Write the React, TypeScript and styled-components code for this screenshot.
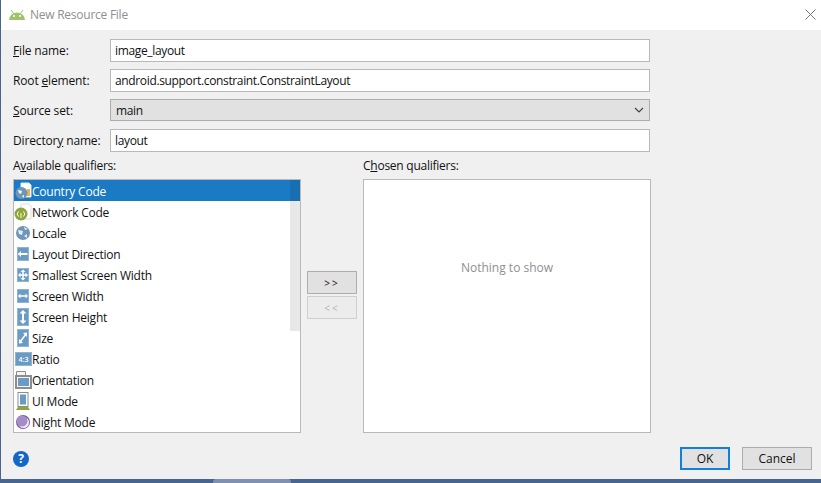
import React from 'react';
import styled, { createGlobalStyle } from 'styled-components';

const Global = createGlobalStyle`
  html, body { margin: 0; padding: 0; background: #4a6491; }
  body { font-family: "Open Sans", "Noto Sans CJK KR", sans-serif; font-size: 12px; color: #111; }
`;

const RatioText = styled.text`
  font-size: 7px;
  font-weight: 600;
  fill: #fff;
  text-anchor: middle;
`;

const Blue = '#6b9ac4';

function Sq({ children, tall }: { children: React.ReactNode; tall?: boolean }) {
  return (
    <svg width="16" height="18" viewBox="0 0 16 18">
      <rect x="2.500" y={tall ? 0.5 : 2.5} width="11" height={tall ? 17 : 13} fill={Blue} stroke="#8fb5d5" />
      {children}
    </svg>
  );
}

const icons: Record<string, React.ReactNode> = {
  country: (
    <svg width="17" height="18" viewBox="0 0 17 18">
      <path d="M6 1h8l2 2v12H6z" fill="#fff" stroke="#e8e8e8" />
      <rect x="12" y="7" width="3" height="7" fill="#e8b64a" />
      <circle cx="6.500" cy="11" r="6" fill="#6f96b8" />
      <path d="M3 8l4 1-1 3-2-1zM7 14l2-1v3z" fill="#fff" />
    </svg>
  ),
  network: (
    <svg width="18" height="18" viewBox="0 0 18 18">
      <path d="M7 1h8l2 2v13H7z" fill="#fff" stroke="#ddd" />
      <circle cx="7" cy="11" r="6.500" fill="#8fa63a" />
      <path d="M7 10v5M4.500 8.500a3.500 3.500 0 0 0 0 5M9.500 8.500a3.500 3.500 0 0 1 0 5" stroke="#fff" fill="none" />
    </svg>
  ),
  locale: (
    <svg width="16" height="18" viewBox="0 0 16 18">
      <circle cx="8" cy="9" r="7" fill="#6f96b8" />
      <path d="M3 6l5 1-1 4-3-1zM9 12l3-2v4zM9 3l4 2-3 1z" fill="#e4edf4" />
    </svg>
  ),
  direction: (
    <Sq>
      <path d="M3.500 9h9" stroke="#fff" strokeWidth="2" />
      <path d="M3 9l3-3v6z" fill="#fff" />
    </Sq>
  ),
  smallest: (
    <Sq>
      <path d="M4 9h8M8 5v8" stroke="#fff" strokeWidth="1.500" />
      <path d="M3 9l2.500-2.500v5zM13 9l-2.500-2.500v5zM8 3.500L5.500 6h5zM8 14.500L5.500 12h5z" fill="#fff" />
    </Sq>
  ),
  width: (
    <Sq>
      <path d="M4 9h8" stroke="#fff" strokeWidth="1.500" />
      <path d="M3 9l2.500-2.500v5zM13 9l-2.500-2.500v5z" fill="#fff" />
    </Sq>
  ),
  height: (
    <Sq tall>
      <path d="M8 3v12" stroke="#fff" strokeWidth="2" />
      <path d="M8 2L4.500 5.500h7zM8 16l-3.500-3.500h7z" fill="#fff" />
    </Sq>
  ),
  size: (
    <Sq tall>
      <path d="M5 13l6-8" stroke="#fff" strokeWidth="1.500" />
      <path d="M12 3.500V8L8 4zM4 14.500V10l4 4z" fill="#fff" />
    </Sq>
  ),
  ratio: (
    <svg width="17" height="18" viewBox="0 0 17 18">
      <rect x="0.500" y="2.500" width="16" height="13" fill={Blue} stroke="#8fb5d5" />
      <RatioText x="8.500" y="11.500">4:3</RatioText>
    </svg>
  ),
  orientation: (
    <svg width="17" height="18" viewBox="0 0 17 18">
      <path d="M1.500 5V.5h9V5" fill="#f4f4f4" stroke="#8d8d8d" />
      <rect x="1" y="5" width="15" height="12" fill="#f4f4f4" stroke="#8d8d8d" strokeWidth="2" />
      <rect x="3" y="7" width="11" height="8" fill={Blue} />
    </svg>
  ),
  ui: (
    <svg width="16" height="18" viewBox="0 0 16 18">
      <rect x="3" y="0.500" width="10" height="14" fill="#fff" stroke="#8d8d8d" />
      <rect x="5" y="2.500" width="6" height="10" fill={Blue} />
      <path d="M3 15h10l2 3H1z" fill="#8fa63a" />
    </svg>
  ),
  night: (
    <svg width="16" height="18" viewBox="0 0 16 18">
      <circle cx="8" cy="9" r="7" fill="#7d5aa6" />
      <circle cx="8.500" cy="9.500" r="5.500" fill="#f3eff7" />
      <circle cx="7" cy="8" r="5.500" fill="#a48cc6" />
    </svg>
  ),
};

const rows = [
  { key: 'country', label: 'Country Code' },
  { key: 'network', label: 'Network Code' },
  { key: 'locale', label: 'Locale' },
  { key: 'direction', label: 'Layout Direction' },
  { key: 'smallest', label: 'Smallest Screen Width' },
  { key: 'width', label: 'Screen Width' },
  { key: 'height', label: 'Screen Height' },
  { key: 'size', label: 'Size' },
  { key: 'ratio', label: 'Ratio' },
  { key: 'orientation', label: 'Orientation' },
  { key: 'ui', label: 'UI Mode' },
  { key: 'night', label: 'Night Mode' },
];

export default function App() {
  return (
    <Page>
      <Global />
      <Dialog>
        <TitleBar>
          <TitleLeft>
            <svg width="16" height="10" viewBox="0 0 16 10">
              <path d="M0 10a8 7.500 0 0 1 16 0z" fill="#9fc36b" />
              <path d="M2 0l2.500 3.500M14 0l-2.500 3.500" stroke="#9fc36b" />
              <circle cx="5" cy="6" r="1" fill="#fff" />
              <circle cx="11" cy="6" r="1" fill="#fff" />
            </svg>
            <TitleText>New Resource File</TitleText>
          </TitleLeft>
          <svg width="11" height="11" viewBox="0 0 11 11">
            <path d="M.5.500l10 10M10.500.500l-10 10" stroke="#777" fill="none" />
          </svg>
        </TitleBar>
        <Body>
          <Form>
            <Label><u>F</u>ile name:</Label>
            <Field>image_layout</Field>
            <Label>Root <u>e</u>lement:</Label>
            <Field>android.support.constraint.ConstraintLayout</Field>
            <Label><u>S</u>ource set:</Label>
            <Select>
              main
              <svg width="10" height="6" viewBox="0 0 10 6">
                <path d="M1 1l4 4 4-4" stroke="#444" strokeWidth="1.200" fill="none" />
              </svg>
            </Select>
            <Label>Director<u>y</u> name:</Label>
            <Field>layout</Field>
          </Form>
          <Qualifiers>
            <Column>
              <ColumnLabel>A<u>v</u>ailable qualifiers:</ColumnLabel>
              <ListBox>
                {rows.map((r, i) => (
                  <Row key={r.key} $selected={i === 0}>
                    <IconSlot>{icons[r.key]}</IconSlot>
                    <RowText>{r.label}</RowText>
                  </Row>
                ))}
                <ScrollThumb />
              </ListBox>
            </Column>
            <Arrows>
              <ArrowButton>&gt;&gt;</ArrowButton>
              <ArrowButton $disabled>&lt;&lt;</ArrowButton>
            </Arrows>
            <Column>
              <ColumnLabel>C<u>h</u>osen qualifiers:</ColumnLabel>
              <EmptyBox>Nothing to show</EmptyBox>
            </Column>
          </Qualifiers>
          <Footer>
            <Help>?</Help>
            <FooterButtons>
              <OkButton>OK</OkButton>
              <CancelButton>Cancel</CancelButton>
            </FooterButtons>
          </Footer>
        </Body>
      </Dialog>
      <BackdropStrip>
        <BackdropPill />
      </BackdropStrip>
    </Page>
  );
}

const Page = styled.div`
  width: 821px;
  height: 483px;
  overflow: hidden;
`;

const Dialog = styled.div`
  width: 820px;
  height: 479px;
  margin-left: 1px;
  display: flex;
  flex-direction: column;
  background: #f0f0f0;
  overflow: hidden;
`;

const BackdropStrip = styled.div`
  height: 4px;
  background: #4a6491;
  padding-left: 213px;
`;

const BackdropPill = styled.div`
  width: 78px;
  height: 4px;
  border-radius: 3px 3px 0 0;
  background: #7f90b0;
`;

const TitleBar = styled.div`
  height: 30px;
  flex: none;
  box-sizing: border-box;
  background: #fff;
  display: flex;
  align-items: center;
  justify-content: space-between;
  padding: 0 5px 1px 8px;
`;

const TitleLeft = styled.div`
  display: flex;
  align-items: center;
  gap: 5px;
`;

const TitleText = styled.span`
  color: #8f8f8f;
  font-size: 12px;
  letter-spacing: -0.25px;
`;

const Body = styled.div`
  flex: 1;
  display: flex;
  flex-direction: column;
  padding: 9px 9px 9px 12px;
`;

const Form = styled.div`
  display: grid;
  grid-template-columns: 97px 540px;
  grid-auto-rows: 23px;
  row-gap: 7px;
  align-items: center;
`;

const Label = styled.label`
  font-size: 12px;
  line-height: 16px;
  letter-spacing: -0.15px;
`;

const Field = styled.div`
  height: 23px;
  box-sizing: border-box;
  background: #fff;
  border: 1px solid #b9b9b9;
  padding: 0 4px;
  line-height: 21px;
  font-size: 12px;
  letter-spacing: -0.35px;
`;

const Select = styled(Field)`
  height: 22px;
  align-self: start;
  background: #e1e1e1;
  border-color: #adadad;
  padding: 0 5px;
  display: flex;
  align-items: center;
  justify-content: space-between;
`;

const Qualifiers = styled.div`
  display: flex;
  margin-top: 6px;
`;

const Column = styled.div`
  width: 288px;
  display: flex;
  flex-direction: column;
`;

const ColumnLabel = styled.div`
  height: 21px;
  line-height: 16px;
  font-size: 12px;
  letter-spacing: -0.25px;
`;

const ListBox = styled.div`
  position: relative;
  height: 254px;
  box-sizing: border-box;
  background: #fff;
  border: 1px solid #b9b9b9;
  overflow: hidden;
`;

const Row = styled.div<{ $selected?: boolean }>`
  height: 21px;
  box-sizing: border-box;
  padding-top: 1px;
  display: flex;
  align-items: center;
  font-size: 12px;
  background: ${p => (p.$selected ? '#1a7ac4' : 'transparent')};
  color: ${p => (p.$selected ? '#fff' : '#111')};
`;

const RowText = styled.span`
  letter-spacing: -0.22px;
`;

const IconSlot = styled.span`
  width: 18px;
  display: flex;
  justify-content: center;
  flex: none;
`;

const ScrollThumb = styled.div`
  position: absolute;
  top: 0;
  right: 0;
  width: 10px;
  height: 151px;
  background: rgba(0, 0, 0, 0.09);
`;

const Arrows = styled.div`
  width: 62px;
  display: flex;
  flex-direction: column;
  align-items: center;
  gap: 2px;
  padding-top: 113px;
  box-sizing: border-box;
`;

const ArrowButton = styled.div<{ $disabled?: boolean }>`
  width: 50px;
  height: 23px;
  box-sizing: border-box;
  display: flex;
  align-items: center;
  justify-content: center;
  letter-spacing: 2px;
  font-size: 10px;
  background: ${p => (p.$disabled ? '#ececec' : '#e1e1e1')};
  border: 1px solid ${p => (p.$disabled ? '#cfcfcf' : '#adadad')};
  color: ${p => (p.$disabled ? '#b5b5b5' : '#111')};
`;

const EmptyBox = styled.div`
  height: 254px;
  box-sizing: border-box;
  background: #fff;
  border: 1px solid #b9b9b9;
  padding-bottom: 77px;
  display: flex;
  align-items: center;
  justify-content: center;
  color: #8f8f8f;
  font-size: 12px;
`;

const Footer = styled.div`
  display: flex;
  align-items: center;
  justify-content: space-between;
  margin-top: 14px;
`;

const Help = styled.div`
  width: 16px;
  height: 16px;
  border-radius: 50%;
  background: #1467c8;
  color: #fff;
  font-size: 12px;
  font-weight: 700;
  display: flex;
  align-items: center;
  justify-content: center;
`;

const FooterButtons = styled.div`
  display: flex;
  gap: 12px;
`;

const OkButton = styled.div`
  width: 50px;
  height: 23px;
  box-sizing: border-box;
  background: #e1e1e1;
  border: 2px solid #0f80dd;
  display: flex;
  align-items: center;
  justify-content: center;
  font-size: 12px;
`;

const CancelButton = styled(OkButton)`
  width: 70px;
  border: 1px solid #adadad;
`;
